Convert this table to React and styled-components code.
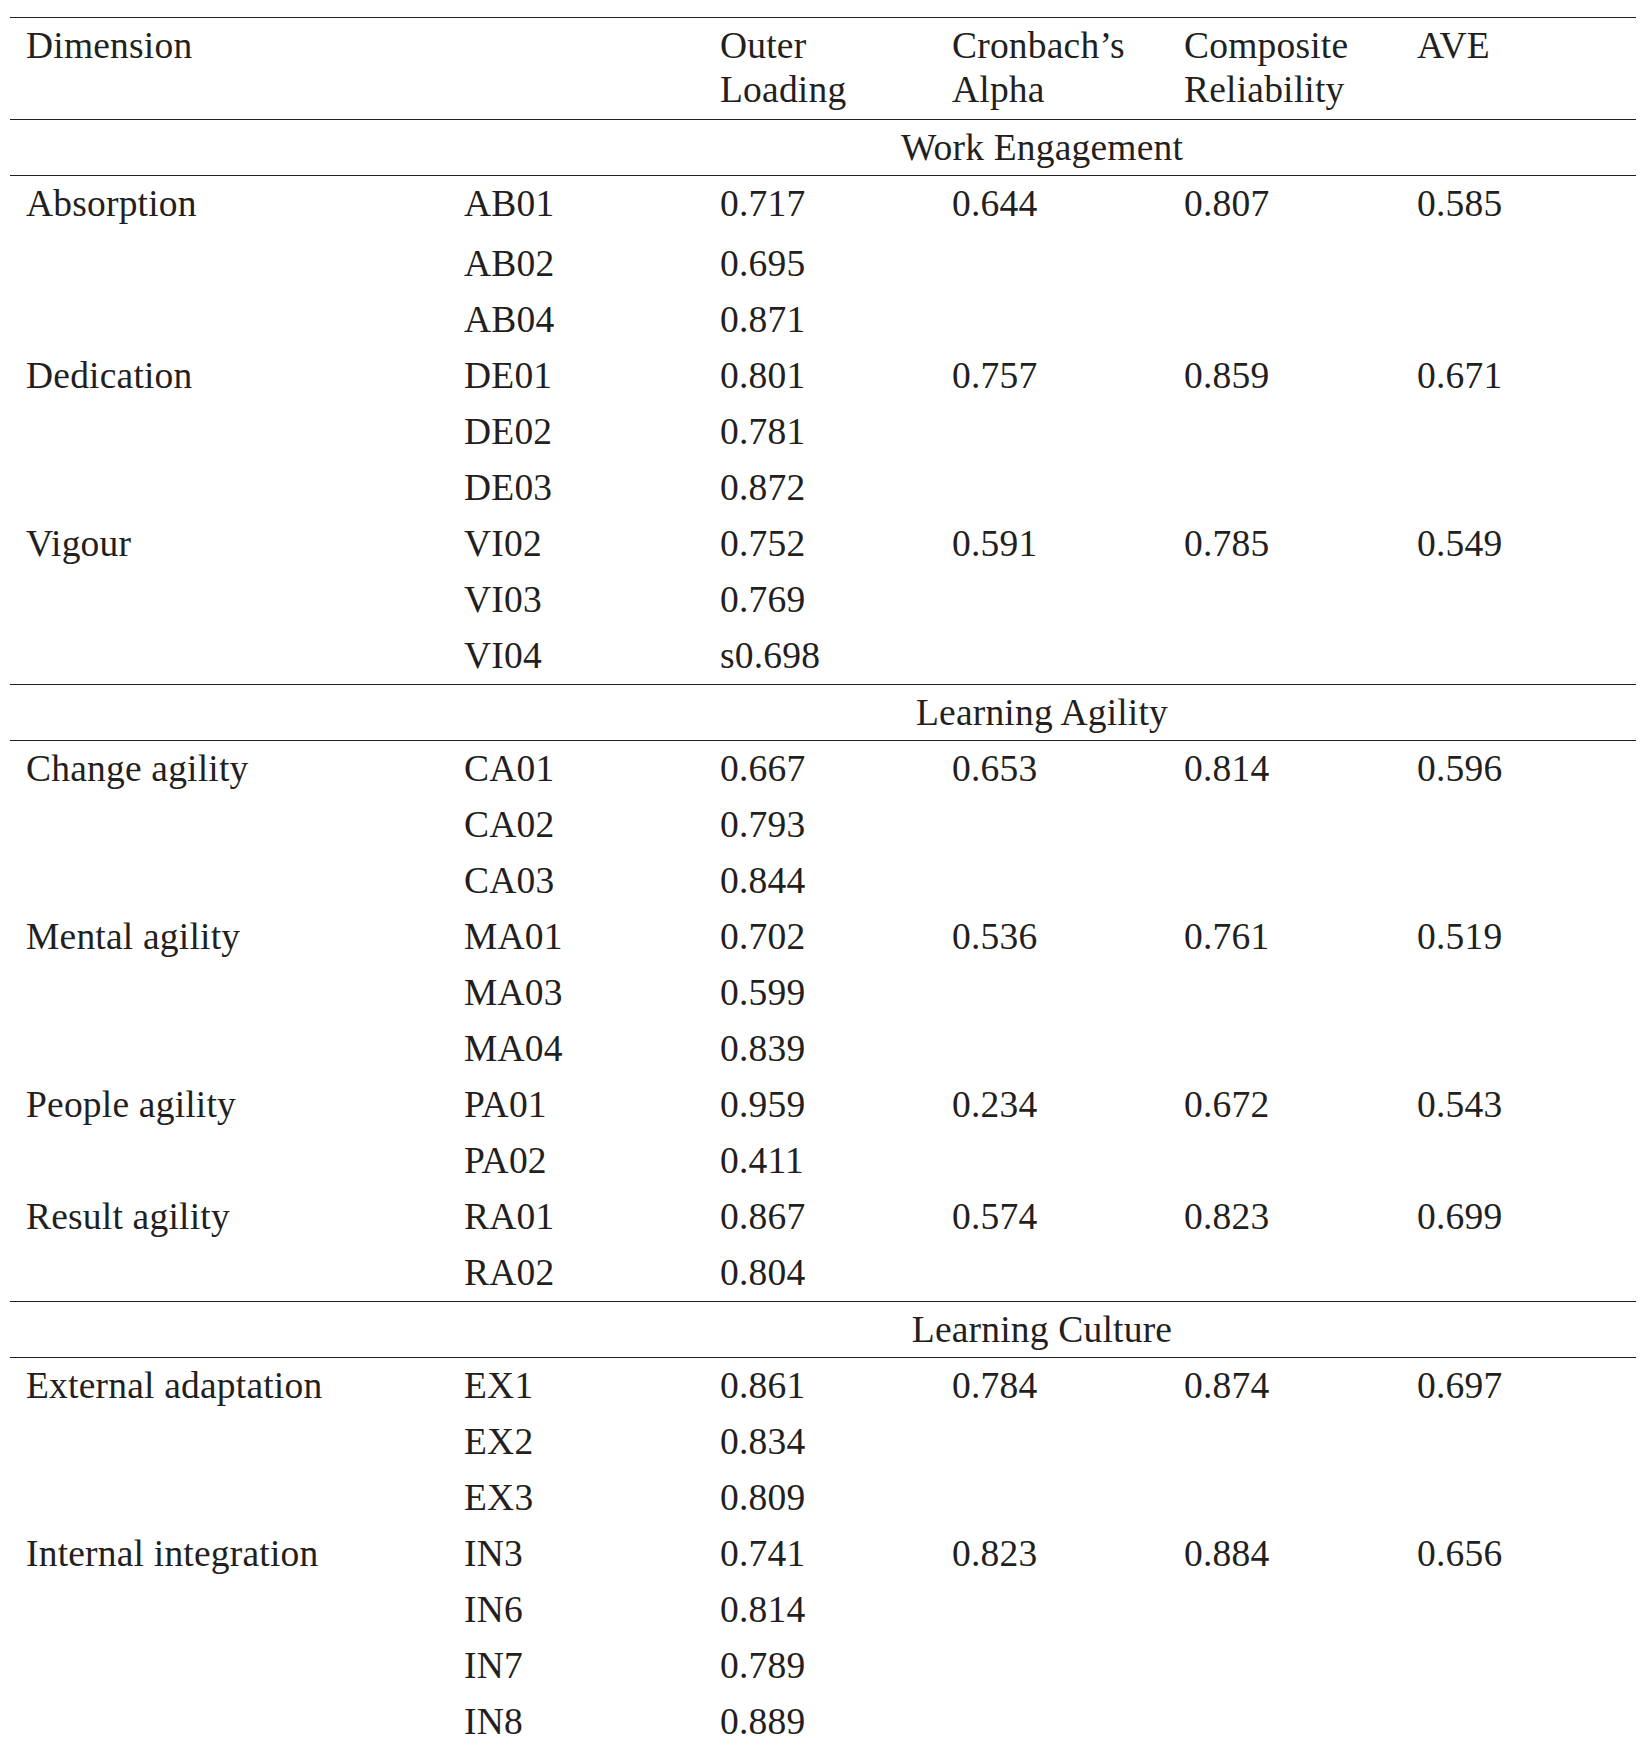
import React from 'react';
import styled, { createGlobalStyle } from 'styled-components';

const GlobalStyle = createGlobalStyle`
  body {
    margin: 0;
    background: #fff;
    color: #231f20;
    font-family: "Liberation Serif", "Times New Roman", serif;
  }
`;

const COLS = '438px 256px 232px 232px 233px 235px';

const Table = styled.div`
  width: 1626px;
  margin: 17px 0 0 10px;
  border-top: 1px solid #231f20;
  font-size: 37.5px;
  letter-spacing: 0.2px;
`;

const HeaderRow = styled.div`
  display: grid;
  grid-template-columns: ${COLS};
  padding: 6px 0 7px;
  border-bottom: 1px solid #231f20;
  line-height: 44px;
`;

const Cell = styled.div`
  padding-left: 16px;
  white-space: nowrap;
`;

const SectionLabel = styled.div`
  display: grid;
  grid-template-columns: ${COLS};
  height: 55px;
  align-items: center;
  border-bottom: 1px solid #231f20;
  line-height: 1;
`;

const LabelText = styled.div`
  grid-column: 2 / -1;
  text-align: center;
`;

const Section = styled.div`
  border-bottom: ${(p) => (p.$last ? 'none' : '1px solid #231f20')};
`;

const Row = styled.div`
  display: grid;
  grid-template-columns: ${COLS};
  height: 56px;
  align-items: center;
  padding-bottom: ${(p) => (p.$tall ? '4px' : '0')};
  line-height: 1;
`;

const sections = [
  {
    title: 'Work Engagement',
    rows: [
      ['Absorption', 'AB01', '0.717', '0.644', '0.807', '0.585'],
      ['', 'AB02', '0.695'],
      ['', 'AB04', '0.871'],
      ['Dedication', 'DE01', '0.801', '0.757', '0.859', '0.671'],
      ['', 'DE02', '0.781'],
      ['', 'DE03', '0.872'],
      ['Vigour', 'VI02', '0.752', '0.591', '0.785', '0.549'],
      ['', 'VI03', '0.769'],
      ['', 'VI04', 's0.698'],
    ],
  },
  {
    title: 'Learning Agility',
    rows: [
      ['Change agility', 'CA01', '0.667', '0.653', '0.814', '0.596'],
      ['', 'CA02', '0.793'],
      ['', 'CA03', '0.844'],
      ['Mental agility', 'MA01', '0.702', '0.536', '0.761', '0.519'],
      ['', 'MA03', '0.599'],
      ['', 'MA04', '0.839'],
      ['People agility', 'PA01', '0.959', '0.234', '0.672', '0.543'],
      ['', 'PA02', '0.411'],
      ['Result agility', 'RA01', '0.867', '0.574', '0.823', '0.699'],
      ['', 'RA02', '0.804'],
    ],
  },
  {
    title: 'Learning Culture',
    rows: [
      ['External adaptation', 'EX1', '0.861', '0.784', '0.874', '0.697'],
      ['', 'EX2', '0.834'],
      ['', 'EX3', '0.809'],
      ['Internal integration', 'IN3', '0.741', '0.823', '0.884', '0.656'],
      ['', 'IN6', '0.814'],
      ['', 'IN7', '0.789'],
      ['', 'IN8', '0.889'],
    ],
  },
];

const App = () => (
  <>
    <GlobalStyle />
    <Table>
      <HeaderRow>
        <Cell>Dimension</Cell>
        <Cell />
        <Cell>Outer<br />Loading</Cell>
        <Cell>Cronbach’s<br />Alpha</Cell>
        <Cell>Composite<br />Reliability</Cell>
        <Cell>AVE</Cell>
      </HeaderRow>
      {sections.map((section, si) => (
        <Section key={section.title} $last={si === sections.length - 1}>
          <SectionLabel>
            <LabelText>{section.title}</LabelText>
          </SectionLabel>
          {section.rows.map((row, ri) => (
            <Row key={row[1]} $tall={si === 0 && ri === 0}>
              {[0, 1, 2, 3, 4, 5].map((ci) => (
                <Cell key={ci}>{row[ci] || ''}</Cell>
              ))}
            </Row>
          ))}
        </Section>
      ))}
    </Table>
  </>
);

export default App;
